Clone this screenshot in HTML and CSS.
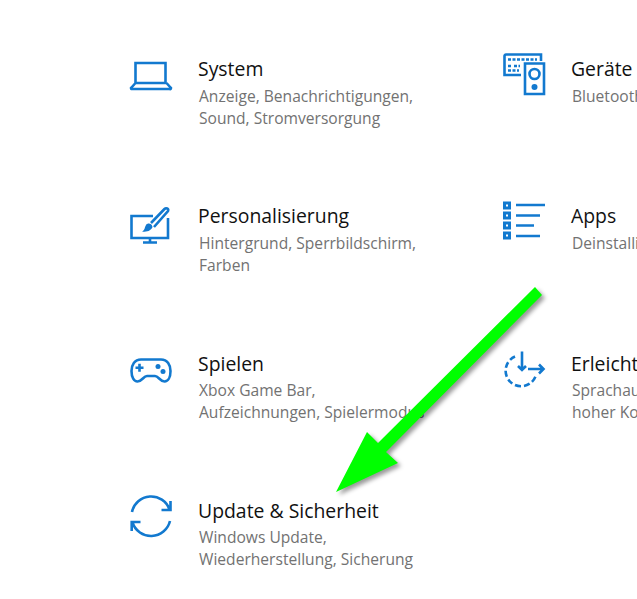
FILE: index.html
```html
<!DOCTYPE html>
<html lang="de">
<head>
  <meta charset="UTF-8" />
  <meta name="viewport" content="width=device-width, initial-scale=1.0"/>
  <title>Einstellungen</title>
  <link rel="stylesheet" href="styles.css">
</head>
<body>

  <div class="settings">

    <div class="item">
      <svg class="icon" viewBox="0 0 42 42">
        <path d="M5.500 10h30v20h-30z M5.500 30l-4 4.500a.8.8 0 0 0 .6 1.500h37.800a.8.8 0 0 0 .6-1.500l-4-4.500"/>
      </svg>
      <div>
        <h2>System</h2>
        <p>Anzeige, Benachrichtigungen,<br>Sound, Stromversorgung</p>
      </div>
    </div>

    <div class="item">
      <svg class="icon" viewBox="0 0 42 42">
        <path d="M18 22H1.500V3a1.500 1.500 0 0 1 1.500-1.500H38V8"/>
        <path d="M22 10.500H41V41H22z"/>
        <circle cx="31.500" cy="21" r="5"/>
        <circle class="dot" cx="31.500" cy="34" r="3"/>
        <path class="dots" d="M5 6.500h29M5 13h4M11 13h6M5 17.500h11"/>
      </svg>
      <div>
        <h2>Geräte</h2>
        <p>Bluetooth, Drucker, Maus</p>
      </div>
    </div>

    <div class="item">
      <svg class="icon" viewBox="0 0 42 42">
        <path d="M23 16H1.500V38H38V18 M20 38v4 M13 42.500H27"/>
        <path d="M21 23L34.500 9c1.500-1.500 4.500-.5 3.500 2L24 27"/>
        <path class="dot" d="M22.500 27c-1 3-5 5.500-10.500 4.500 3-1.500 2.500-4 4-6.500 1.200-2 5.500-2.500 6.500 2z"/>
      </svg>
      <div>
        <h2>Personalisierung</h2>
        <p>Hintergrund, Sperrbildschirm,<br>Farben</p>
      </div>
    </div>

    <div class="item">
      <svg class="icon" viewBox="0 0 42 42">
        <path class="squares" d="M0 1.500h8v8H0z M0 11.500h8v8H0z M0 21.500h8v8H0z M0 31.500h8v8H0z"/>
        <path class="holes" d="M3 4.500h2v2H3z M3 14.500h2v2H3z M3 24.500h2v2H3z M3 34.500h2v2H3z"/>
        <path d="M13 5H42 M13 15.500H37 M13 25.500H31 M13 36H37"/>
      </svg>
      <div>
        <h2>Apps</h2>
        <p>Deinstallieren, Standardwerte</p>
      </div>
    </div>

    <div class="item">
      <svg class="icon" viewBox="0 0 42 42">
        <path d="M11 11.500H31C37.500 11.500 40.500 17 40.500 23C40.500 29.500 38 33.500 34.500 33.500C30 33.500 28.500 28 25 28H17C13.500 28 12 33.500 7.500 33.500C4 33.500 1.500 29.500 1.500 23C1.500 17 4.500 11.500 11 11.500Z"/>
        <path d="M5.500 19.700h8 M9.500 15.700v8"/>
        <circle class="dot" cx="28" cy="18.600" r="2.500"/>
        <circle class="dot" cx="33" cy="23.500" r="2.500"/>
      </svg>
      <div>
        <h2>Spielen</h2>
        <p>Xbox Game Bar,<br>Aufzeichnungen, Spielermodus</p>
      </div>
    </div>

    <div class="item">
      <svg class="icon" viewBox="0 0 42 42">
        <path d="M12 8.500A15.500 15.500 0 1 0 33 27" stroke-dasharray="6 3"/>
        <path d="M19 3.500V22 M15 18l4 4 4-4"/>
        <path d="M25 21H40.500 M36 16.500l4.500 4.500-4.500 4.500"/>
      </svg>
      <div>
        <h2>Erleichterte Bedienung</h2>
        <p>Sprachausgabe, Bildschirmlupe,<br>hoher Kontrast</p>
      </div>
    </div>

    <div class="item">
      <svg class="icon" viewBox="0 0 42 42">
        <path d="M2 17A19.500 19.500 0 0 1 39.500 14.500 M40.500 6V15H31.500"/>
        <path d="M40 26A19.500 19.500 0 0 1 2.500 27.500 M1.700 36V27H10.500"/>
      </svg>
      <div>
        <h2>Update &amp; Sicherheit</h2>
        <p>Windows Update,<br>Wiederherstellung, Sicherung</p>
      </div>
    </div>

  </div>

  <!-- green arrow drawn over the screenshot -->
  <svg class="arrow" viewBox="0 0 637 599">
    <polygon points="535,287 542,295 386,452 398,463 336,492 367,432 378,443"/>
  </svg>

</body>
</html>
```

FILE: styles.css
```css
* {
  box-sizing: border-box;
}

body {
  margin: 0;
  height: 599px;
  overflow: hidden;
  background: #fff;
  font-family: 'Open Sans', sans-serif;
  position: relative;
}

.settings {
  display: grid;
  grid-template-columns: 373px 373px;
  grid-auto-rows: 147.3px;
  padding: 53px 0 0 130px;
  width: 900px;
}

.item {
  display: flex;
  align-items: flex-start;
  gap: 26px;
}

.icon {
  width: 42px;
  height: 42px;
  flex-shrink: 0;
  fill: none;
  stroke: #1279cf;
  stroke-width: 2.600;
  overflow: visible;
}

.icon .dots {
  stroke-width: 2.600;
  stroke-dasharray: 3 1.500;
}

.icon .dot {
  fill: #1279cf;
  stroke: none;
}

.icon .squares {
  fill: #1279cf;
  stroke: none;
}

.icon .holes {
  fill: #fff;
  stroke: none;
}

h2 {
  margin: 0 0 1px;
  padding-top: 1px;
  font-size: 19.4px;
  font-weight: 400;
  line-height: 29.500px;
  color: #111;
  white-space: nowrap;
}

p {
  margin: 0;
  font-size: 15.600px;
  line-height: 22px;
  color: #727272;
  white-space: nowrap;
  padding-left: 1px;
}

.arrow {
  position: absolute;
  left: 0;
  top: 0;
  width: 637px;
  height: 599px;
  fill: #00ff00;
  filter: drop-shadow(3px 3px 2px rgba(0, 0, 0, 0.4));
}
```
